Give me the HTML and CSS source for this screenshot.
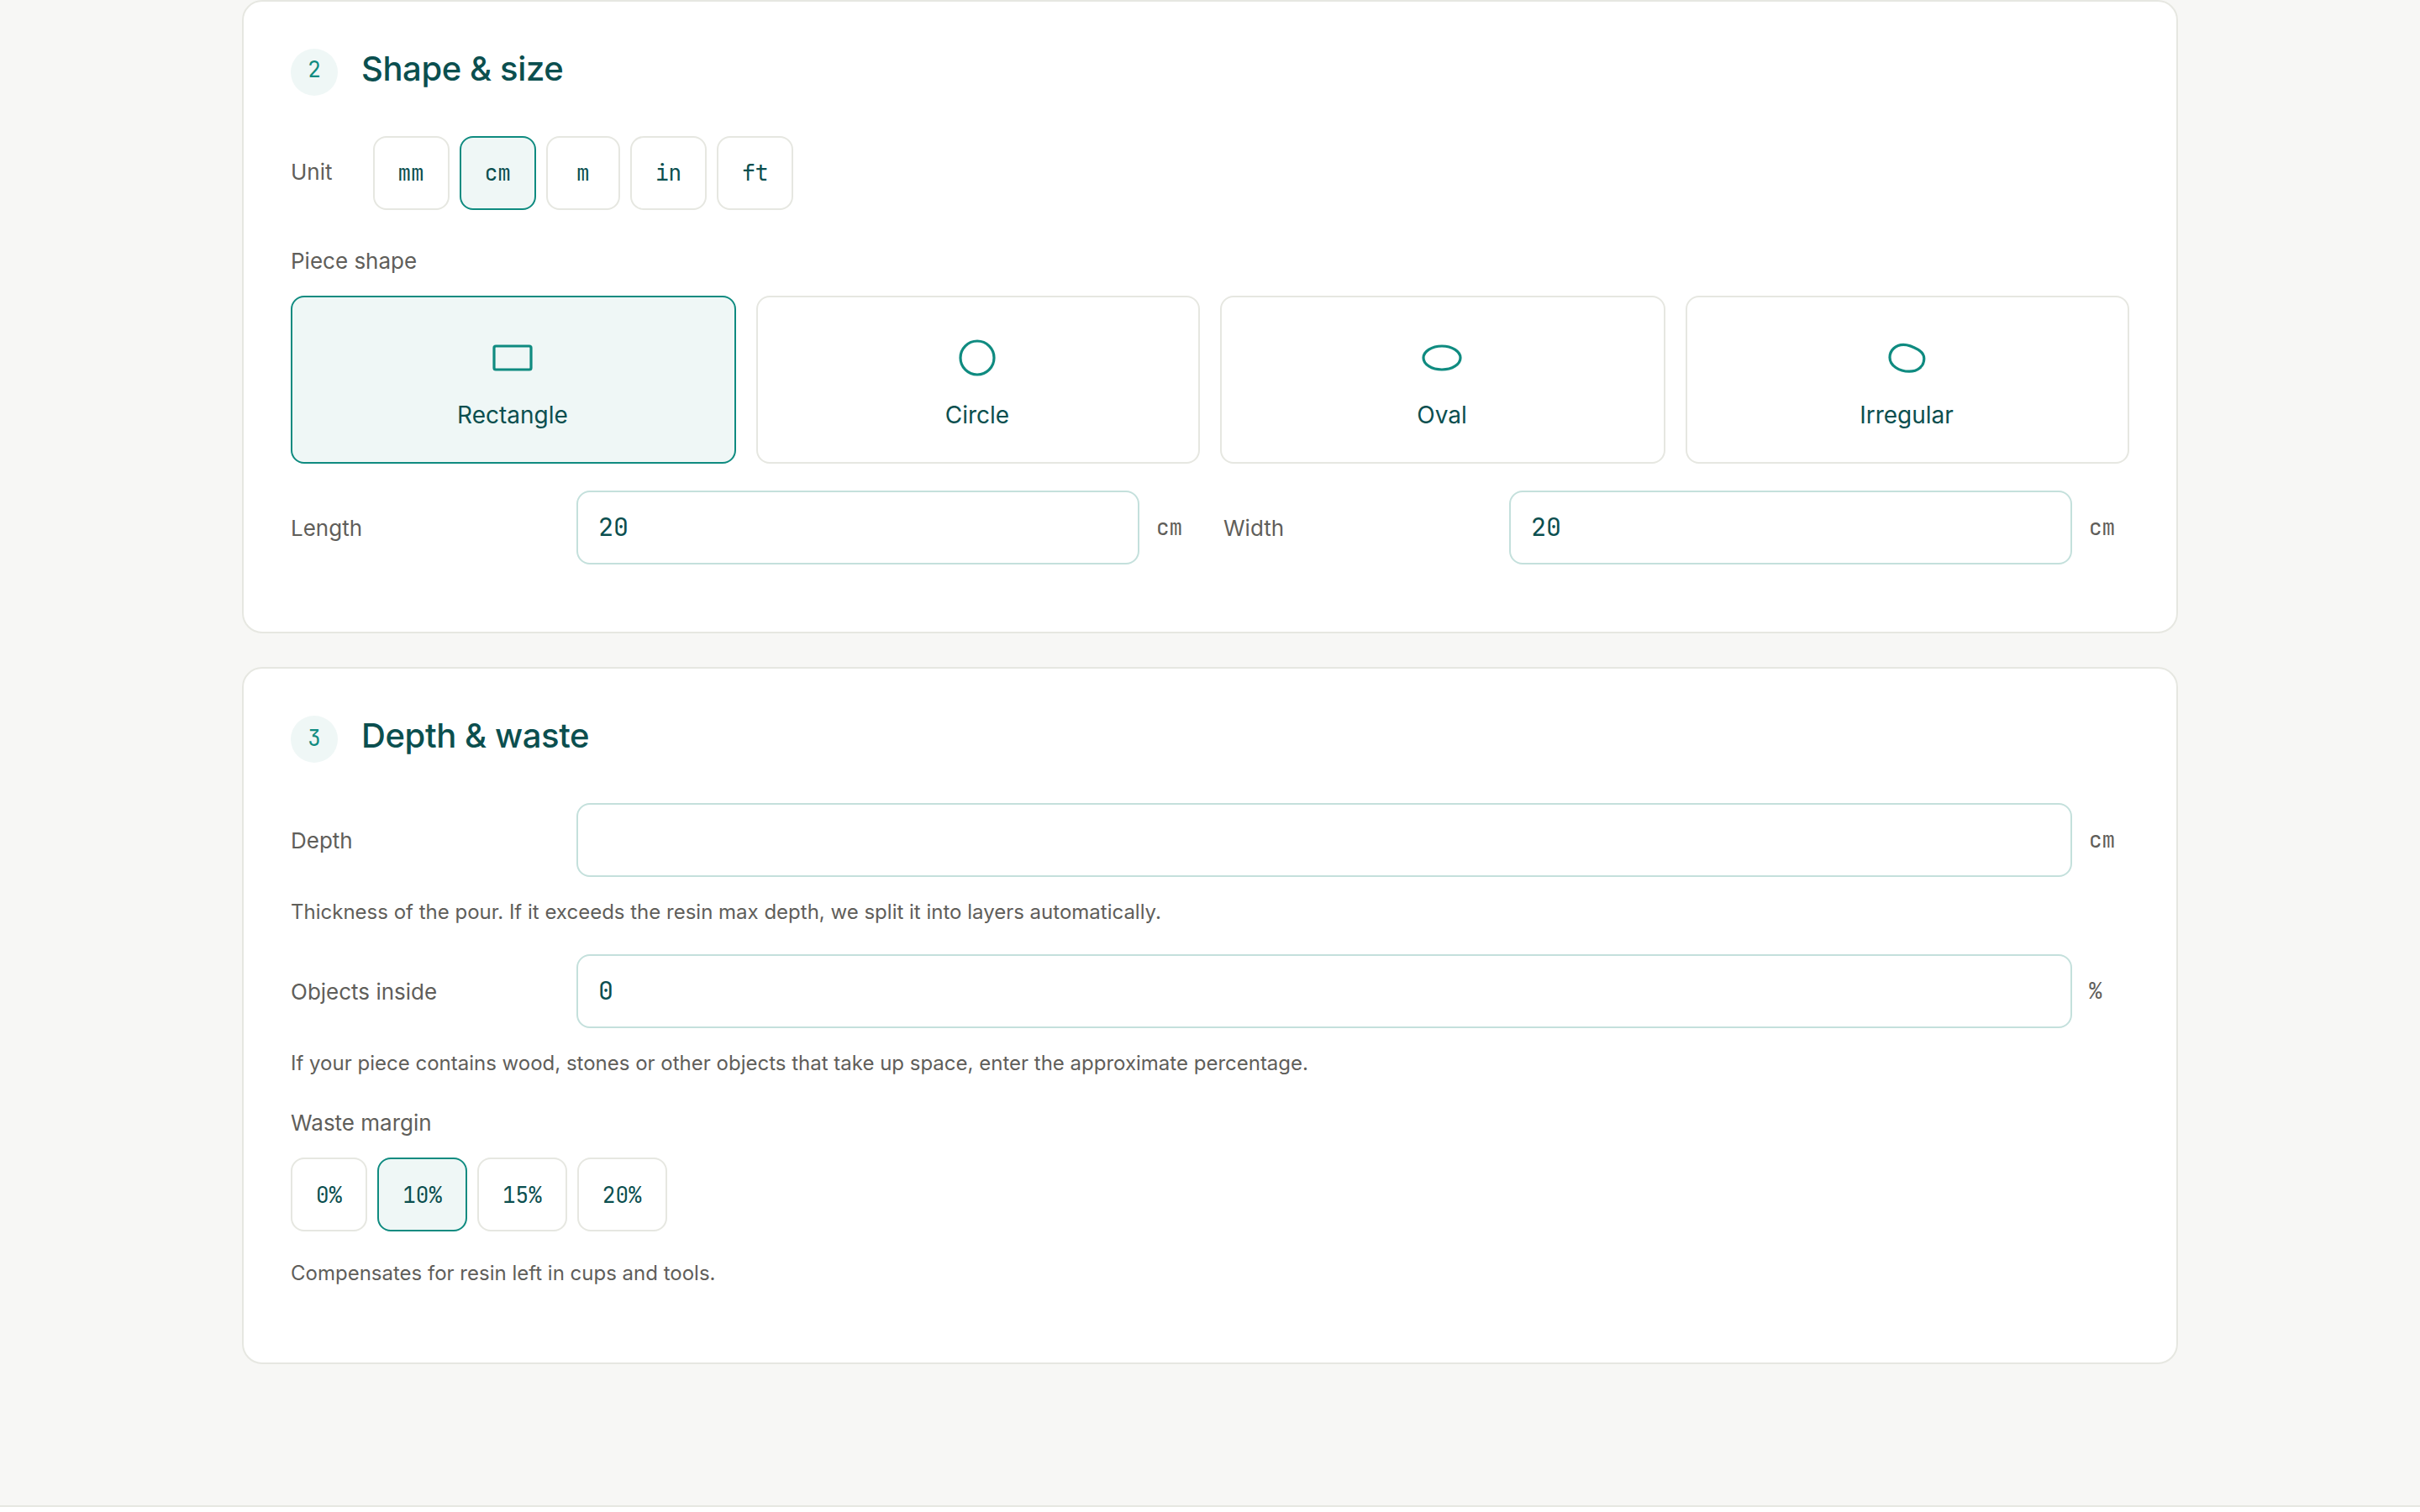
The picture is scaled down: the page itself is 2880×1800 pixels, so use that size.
FILE: index.html
```
<!DOCTYPE html>
<html lang="en">
<head>
  <meta charset="UTF-8">
  <meta name="viewport" content="width=device-width, initial-scale=1.0">
  <title>Resin calculator</title>
  <link rel="stylesheet" href="styles.css">
</head>
<body>
  <main class="container">
    <section class="card">
      <header class="card-head">
        <span class="step">2</span>
        <h2>Shape &amp; size</h2>
      </header>
      <div class="unit-row">
        <span class="label">Unit</span>
        <div class="pills">
          <button class="pill" type="button">mm</button>
          <button class="pill active" type="button">cm</button>
          <button class="pill" type="button">m</button>
          <button class="pill" type="button">in</button>
          <button class="pill" type="button">ft</button>
        </div>
      </div>
      <div class="label block-label">Piece shape</div>
      <div class="shapes">
        <button class="shape active" type="button">
          <svg viewBox="0 0 28 28"><rect x="3" y="7" width="22" height="14" rx="1"/></svg>
          <span>Rectangle</span>
        </button>
        <button class="shape" type="button">
          <svg viewBox="0 0 28 28"><circle cx="14" cy="14" r="10"/></svg>
          <span>Circle</span>
        </button>
        <button class="shape" type="button">
          <svg viewBox="0 0 28 28"><ellipse cx="14" cy="14" rx="11" ry="7"/></svg>
          <span>Oval</span>
        </button>
        <button class="shape" type="button">
          <svg viewBox="0 0 28 28"><path d="M4 13.7C4 9.5 7.5 6.2 12.1 6.2c3.4 0 6.2 1.4 8.7 2.9 2.2 1.3 3.6 2.9 3.6 5.4 0 4.5-3.8 7.6-8.8 7.6C9.5 22.1 4 18.6 4 13.7Z"/></svg>
          <span>Irregular</span>
        </button>
      </div>
      <div class="dims">
        <div class="field">
          <label class="label" for="length">Length</label>
          <input id="length" type="text" value="20">
          <span class="suffix">cm</span>
        </div>
        <div class="field">
          <label class="label" for="width">Width</label>
          <input id="width" type="text" value="20">
          <span class="suffix">cm</span>
        </div>
      </div>
    </section>

    <section class="card">
      <header class="card-head">
        <span class="step step-low">3</span>
        <h2>Depth &amp; waste</h2>
      </header>
      <div class="field">
        <label class="label" for="depth">Depth</label>
        <input id="depth" type="text">
        <span class="suffix">cm</span>
      </div>
      <p class="hint">Thickness of the pour. If it exceeds the resin max depth, we split it into layers automatically.</p>
      <div class="field">
        <label class="label" for="objects">Objects inside</label>
        <input id="objects" type="text" value="0">
        <span class="suffix">%</span>
      </div>
      <p class="hint">If your piece contains wood, stones or other objects that take up space, enter the approximate percentage.</p>
      <div class="label block-label waste-label">Waste margin</div>
      <div class="pills waste">
        <button class="pill" type="button">0%</button>
        <button class="pill active" type="button">10%</button>
        <button class="pill" type="button">15%</button>
        <button class="pill" type="button">20%</button>
      </div>
      <p class="hint last">Compensates for resin left in cups and tools.</p>
    </section>
  </main>
  <footer class="footer"></footer>
</body>
</html>
```
FILE: styles.css
```
:root {
  --bg: #f7f7f5;
  --card-bg: #ffffff;
  --line: #e6e7e1;
  --input-line: #c4e0dc;
  --teal: #0f8b80;
  --teal-soft: #eff7f6;
  --ink: #0b4f4f;
  --muted: #5f5e5a;
  --sans: Inter, "Liberation Sans", sans-serif;
  --mono: "JetBrains Mono", "DejaVu Sans Mono", "Liberation Mono", monospace;
}
* { box-sizing: border-box; }
body {
  margin: 0;
  height: 1800px;
  display: flex;
  flex-direction: column;
  overflow: hidden;
  font-family: var(--sans);
  background: var(--bg);
  color: var(--ink);
}
button, input { font: inherit; color: inherit; }
.container {
  width: 2304px;
  margin: 0 auto;
  display: flex;
  flex-direction: column;
  gap: 40px;
}
.card {
  background: var(--card-bg);
  border: 2px solid var(--line);
  border-radius: 24px;
  padding: 56px;
}
.card-head {
  display: flex;
  gap: 28px;
  height: 56px;
  margin-bottom: 48px;
}
.step {
  width: 56px;
  height: 56px;
  border-radius: 50%;
  background: var(--teal-soft);
  color: var(--teal);
  font-family: var(--mono);
  font-size: 26px;
  line-height: 50px;
  text-align: center;
}
.step-low { line-height: 54px; }
.card-head h2 {
  margin: 0;
  font-size: 40px;
  font-weight: 500;
  line-height: 48px;
  letter-spacing: -0.01em;
}
.label {
  font-size: 26px;
  line-height: 40px;
  color: var(--muted);
}
.unit-row {
  display: flex;
  align-items: center;
  gap: 48px;
}
.unit-row .label { padding-bottom: 2px; }
.pills {
  display: flex;
  gap: 12px;
}
.pill {
  min-width: 88px;
  height: 88px;
  padding: 0 28px 2px;
  border: 2px solid var(--line);
  border-radius: 16px;
  background: var(--card-bg);
  font-family: var(--mono);
  font-size: 26px;
}
.waste .pill { padding: 1px 28px 0; }
.pill.active, .shape.active {
  background: var(--teal-soft);
  border-color: var(--teal);
}
.block-label {
  margin: 41px 0 21px;
}
.shapes {
  display: grid;
  grid-template-columns: 530px 528px 530px 528px;
  gap: 24px;
}
.shape {
  height: 200px;
  padding: 10px 2px 0 0;
  display: flex;
  flex-direction: column;
  align-items: center;
  justify-content: center;
  gap: 18px;
  border: 2px solid var(--line);
  border-radius: 16px;
  background: var(--card-bg);
  font-size: 28px;
  line-height: 44px;
}
.shape svg {
  width: 56px;
  height: 56px;
  fill: none;
  stroke: var(--teal);
  stroke-width: 1.6;
}
.dims {
  display: grid;
  grid-template-columns: 1fr 1fr;
  gap: 32px;
  margin: 32px 0 24px;
}
.field {
  display: flex;
  align-items: center;
  gap: 20px;
}
.field .label {
  width: 320px;
  padding-top: 2px;
}
.field input {
  flex: 1;
  min-width: 0;
  height: 88px;
  padding: 0 24px 2px;
  border: 2px solid var(--input-line);
  border-radius: 16px;
  background: var(--card-bg);
  font-family: var(--mono);
  font-size: 30px;
}
.suffix {
  width: 48px;
  padding-bottom: 2px;
  font-family: var(--mono);
  font-size: 26px;
  color: var(--muted);
}
.hint {
  margin: 24px 0 32px;
  font-size: 24px;
  line-height: 36px;
  color: var(--muted);
}
.waste-label { margin: 33px 0 21px; }
.hint.last { margin: 32px 0; }
.footer {
  margin-top: auto;
  height: 8px;
  border-top: 2px solid var(--line);
  background: var(--card-bg);
}
```
